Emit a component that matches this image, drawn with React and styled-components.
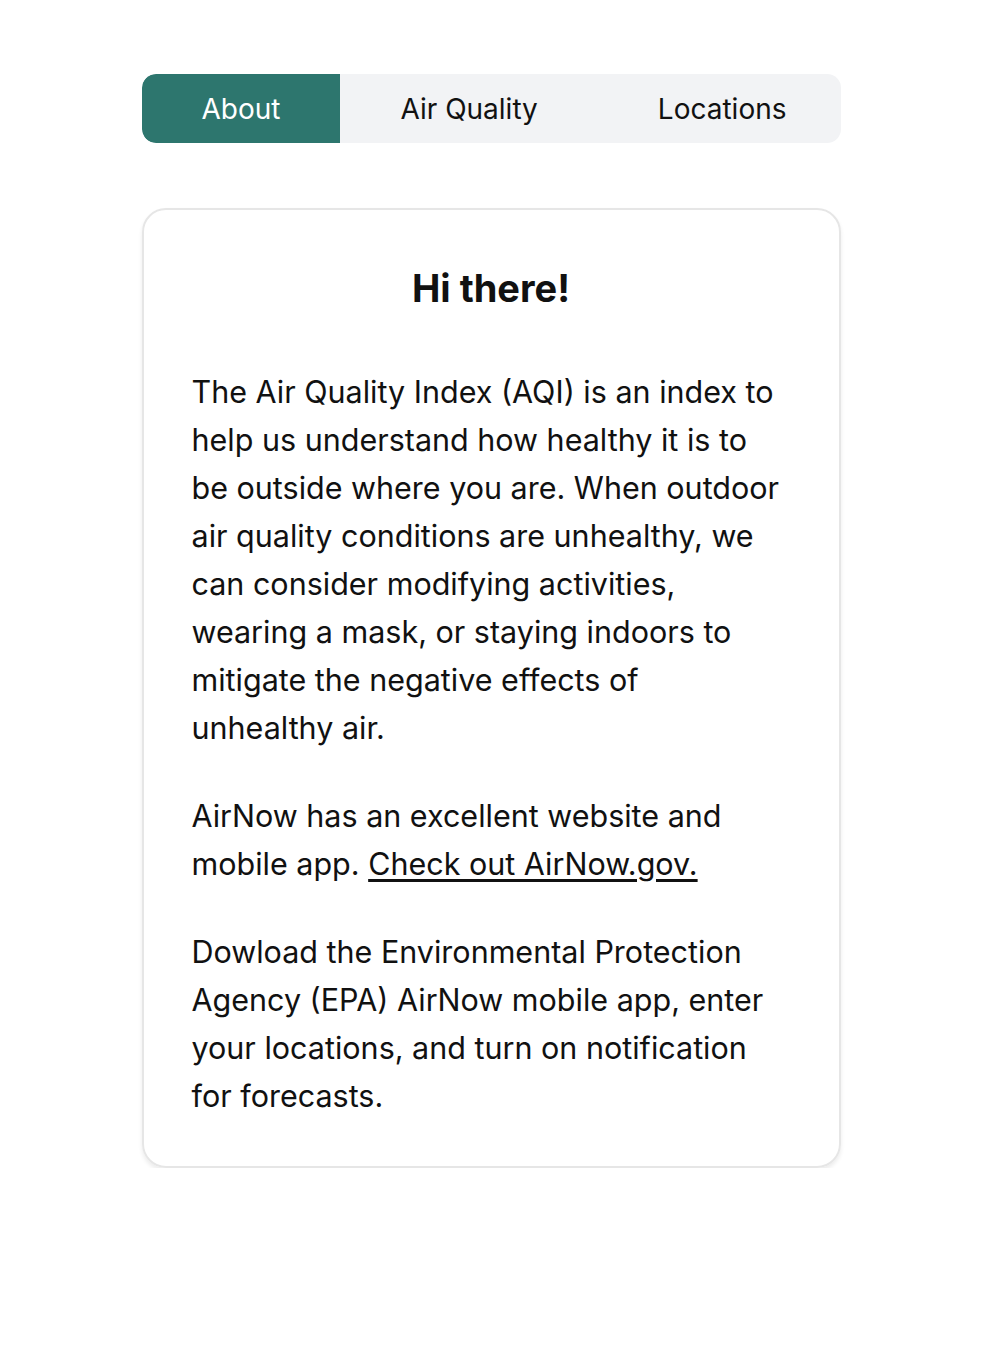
import React, {useState} from 'react';
import styled, {createGlobalStyle} from 'styled-components';

const GlobalStyle = createGlobalStyle`
  body {
    margin: 0;
    background: #fff;
    color: #111;
    font-family: Inter, "Noto Sans", sans-serif;
    -webkit-font-smoothing: antialiased;
  }
`

const Page = styled.div`
  width: 699px;
  margin: 0 auto;
  padding-top: 74px;
`

const Tabs = styled.nav`
  display: flex;
  height: 69px;
  background: #f2f3f5;
  border-radius: 14px;
  overflow: hidden;
`

const Tab = styled.button`
  flex-shrink: 0;
  white-space: nowrap;
  border: 0;
  padding: 0 60px;
  font-family: inherit;
  font-size: 28px;
  font-weight: 400;
  cursor: pointer;
  background: ${p => (p.$active ? '#2d766e' : 'transparent')};
  color: ${p => (p.$active ? '#fff' : '#111')};
  border-radius: ${p => (p.$active ? '14px' : '0')};
  border-top-right-radius: 0;
  border-bottom-right-radius: 0;
`

const Card = styled.section`
  margin-top: 65px;
  border: 2px solid #e6e6e6;
  border-radius: 24px;
  box-shadow: 0 3px 4px rgba(0, 0, 0, 0.08);
  padding: 50px 48px 46px;
`

const Heading = styled.h1`
  margin: 0 0 52px;
  text-align: center;
  font-size: 38px;
  font-weight: 700;
  line-height: 56px;
`

const Paragraph = styled.p`
  margin: 0 6px 40px 0;
  font-size: 30.5px;
  line-height: 48px;

  &:last-child {
    margin-bottom: 0;
  }
`

const Link = styled.a`
  color: inherit;
  text-decoration: underline;
  text-underline-offset: 4px;
`

const tabs = ['About', 'Air Quality', 'Locations']

const App = () => {
  const [active, setActive] = useState('About')

  return (
    <Page>
      <GlobalStyle/>
      <Tabs>
        {tabs.map(t => (
          <Tab key={t} $active={t === active} onClick={() => setActive(t)}>{t}</Tab>
        ))}
      </Tabs>
      <Card>
        <Heading>Hi there!</Heading>
        <Paragraph>
          The Air Quality Index (AQI) is an index to help us understand how healthy it is to be outside where you are. When outdoor air quality conditions are unhealthy, we can consider modifying activities, wearing a mask, or staying indoors to mitigate the negative effects of unhealthy air.
        </Paragraph>
        <Paragraph>
          AirNow has an excellent website and mobile app. <Link href="#">Check out AirNow.gov.</Link>
        </Paragraph>
        <Paragraph>
          Dowload the Environmental Protection Agency (EPA) AirNow mobile app, enter your locations, and turn on notification for forecasts.
        </Paragraph>
      </Card>
    </Page>
  );
};

export default App;
